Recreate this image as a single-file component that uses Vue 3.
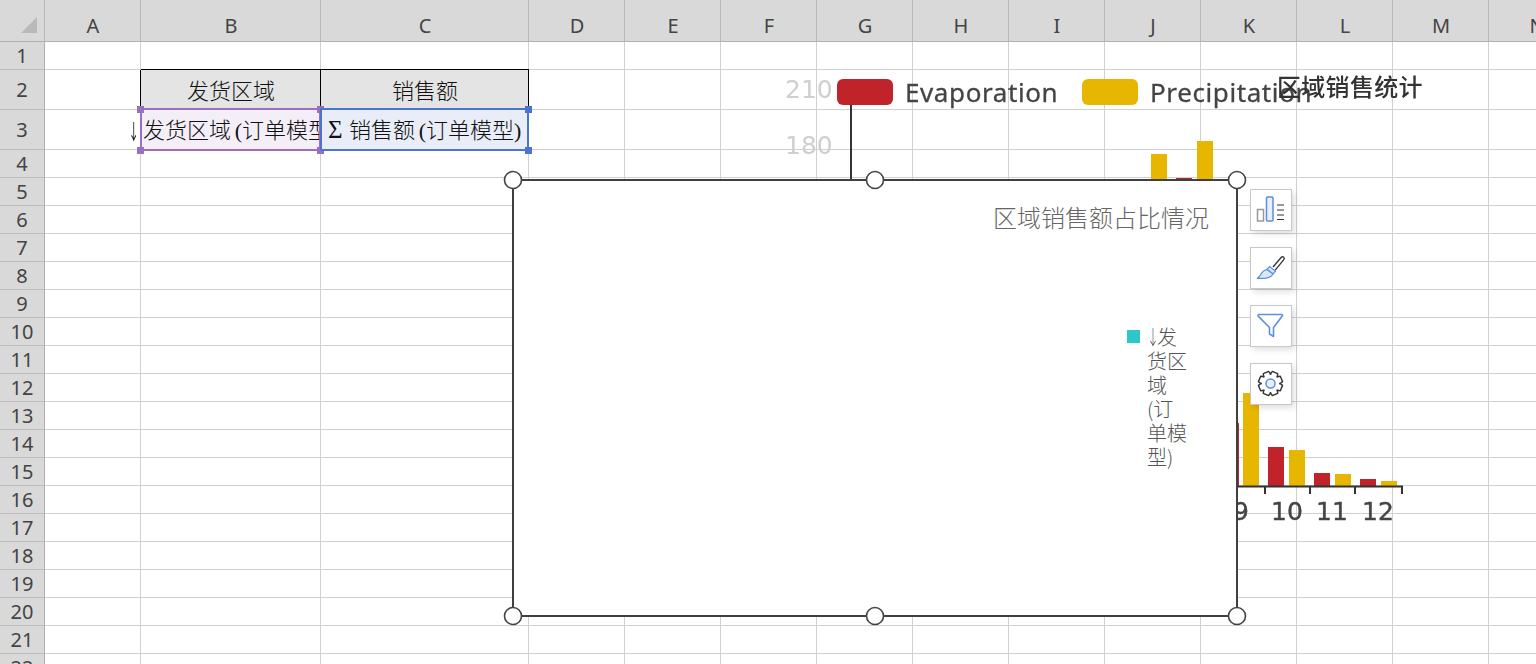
<script setup>
const letters = ['A','B','C','D','E','F','G','H','I','J','K','L','M','N']
const rows = Array.from({ length: 22 }, (_, i) => i + 1)
const legendLines = ['货区', '域', '(订', '单模', '型)']
const bars = [
  { x: 1151, y: 154, w: 16, h: 26, c: '#e6b600' },
  { x: 1176, y: 178, w: 16, h: 2, c: '#c1232b' },
  { x: 1197, y: 141, w: 16, h: 39, c: '#e6b600' },
  { x: 1236, y: 423, w: 3, h: 63, c: '#c1232b' },
  { x: 1243, y: 393, w: 16, h: 93, c: '#e6b600' },
  { x: 1268, y: 447, w: 16, h: 39, c: '#c1232b' },
  { x: 1289, y: 450, w: 16, h: 36, c: '#e6b600' },
  { x: 1314, y: 473, w: 16, h: 13, c: '#c1232b' },
  { x: 1335, y: 474, w: 16, h: 12, c: '#e6b600' },
  { x: 1360, y: 479, w: 16, h: 7, c: '#c1232b' },
  { x: 1381, y: 481, w: 16, h: 5, c: '#e6b600' }
]
const ticks = [1265, 1310, 1355, 1402]
const tickLabels = [[1241, '9'], [1287, '10'], [1332, '11'], [1378, '12']]
const handles = [[513,180],[875,180],[1237,180],[513,616],[875,616],[1237,616]]
const gear = (() => {
  const cx = 20.5, cy = 20.5, n = 8
  let d = ''
  for (let i = 0; i < n; i++) {
    const a = (i / n) * Math.PI * 2 + Math.PI / 8
    const pts = [[9.3, -0.42], [12.2, -0.24], [12.2, 0.24], [9.3, 0.42]]
    pts.forEach(([r, o], j) => {
      const x = (cx + r * Math.cos(a + o)).toFixed(2)
      const y = (cy + r * Math.sin(a + o)).toFixed(2)
      d += (i === 0 && j === 0 ? 'M' : 'L') + x + ' ' + y + ' '
    })
  }
  return d + 'Z'
})()
</script>

<template>
  <div class="page">
    <div class="sheet">
      <div class="corner"><i class="tri"></i></div>
      <div v-for="l in letters" :key="l" class="col-head">{{ l }}</div>
      <template v-for="r in rows" :key="r">
        <div class="row-head">{{ r }}</div>
        <div v-for="l in letters" :key="l" class="cell" :class="{
          'hd': r === 2 && (l === 'B' || l === 'C'),
          'hd-left': r === 2 && l === 'B',
          'a3': r === 3 && l === 'A',
          'sel-b': r === 3 && l === 'B',
          'sel-c': r === 3 && l === 'C'
        }">
          <template v-if="r === 2 && l === 'B'"><span class="hd-text">发货区域</span></template>
          <template v-else-if="r === 2 && l === 'C'"><span class="hd-text">销售额</span></template>
          <template v-else-if="r === 3 && l === 'A'"><span class="a3-arrow">↓</span></template>
          <template v-else-if="r === 3 && l === 'B'">
            <span class="clip">发货区域<b class="p open">(</b>订单模型<b class="p close">)</b></span>
            <i class="h tl"></i><i class="h tr"></i><i class="h bl"></i><i class="h br"></i>
          </template>
          <template v-else-if="r === 3 && l === 'C'">
            <span class="clip"><b class="sum">Σ</b>销售额<b class="p open">(</b>订单模型<b class="p close">)</b></span>
            <i class="h tr"></i><i class="h br"></i>
          </template>
        </div>
      </template>
    </div>

    <svg class="under" width="1536" height="664" viewBox="0 0 1536 664">
      <text x="785" y="98" class="axis-faint">210</text>
      <text x="785" y="154" class="axis-faint">180</text>
      <rect x="837" y="79" width="56" height="26" rx="6" fill="#c1232b" />
      <rect x="1082" y="79" width="56" height="26" rx="6" fill="#e6b600" />
      <text x="905" y="102" class="leg">Evaporation</text>
      <text x="1150" y="102" class="leg">Precipitation</text>
      <text x="1277" y="96" class="chart-title">区域销售统计</text>
      <line x1="851" y1="105" x2="851" y2="181" stroke="#333" stroke-width="2" />
      <rect v-for="(b, i) in bars" :key="i" :x="b.x" :y="b.y" :width="b.w" :height="b.h" :fill="b.c" />
      <line x1="1236" y1="486.5" x2="1403" y2="486.5" stroke="#333" stroke-width="2" />
      <line v-for="t in ticks" :key="t" :x1="t" y1="486" :x2="t" y2="494" stroke="#333" stroke-width="2" />
      <text v-for="t in tickLabels" :key="t[1]" :x="t[0]" y="520" text-anchor="middle" class="tick">{{ t[1] }}</text>
    </svg>

    <div class="frame">
      <div class="title">区域销售额占比情况</div>
      <div class="legend">
        <i class="swatch"></i>
        <div class="legend-text">
          <div><span class="arr">↓</span>发</div>
          <div v-for="t in legendLines" :key="t">{{ t }}</div>
        </div>
      </div>
    </div>

    <svg class="handles" width="1536" height="664" viewBox="0 0 1536 664">
      <circle v-for="(h, i) in handles" :key="i" :cx="h[0]" :cy="h[1]" r="8.5" fill="#fff" stroke="#444" stroke-width="1.6" />
    </svg>

    <div class="tools">
      <div class="tool">
        <svg width="41" height="41" viewBox="0 0 41 41" fill="none">
          <rect x="7.500" y="20.500" width="6" height="11.500" stroke="#999" stroke-width="1.500" />
          <rect x="16.500" y="8" width="6.500" height="24" rx="1" fill="#e8f0fc" stroke="#5b8fe0" stroke-width="1.500" />
          <path d="M27 16h7M27 21h7M27 26h7M27 30.500h7" stroke="#333" stroke-width="1.200" />
        </svg>
      </div>
      <div class="tool">
        <svg width="41" height="41" viewBox="0 0 41 41" fill="none">
          <path d="M23 20 31.300 10.300a1.700 1.700 0 0 1 2.500 2.300L25 23.300" fill="#fff" stroke="#333" stroke-width="1.300" />
          <path d="M19.500 19.500l6 4.500-2.500 3-6-4.500z" fill="#dbe7fa" stroke="#5b8fe0" stroke-width="1.200" />
          <path d="M17 22.500c-3.500.8-5 2.500-6.200 4.800-.7 1.500-2 3-3.500 4h7.500c3.500 0 6.500-1.700 8.200-4.300z" fill="#dbe7fa" stroke="#5b8fe0" stroke-width="1.200" stroke-linejoin="round" />
        </svg>
      </div>
      <div class="tool">
        <svg width="41" height="41" viewBox="0 0 41 41" fill="none">
          <path d="M9 9.500h22.500a1 1 0 0 1 .8 1.600L23.500 22.500v9l-4-2.500v-6.500L8.200 11.100a1 1 0 0 1 .8-1.600z" stroke="#5b8fe0" stroke-width="1.600" stroke-linejoin="round" />
        </svg>
      </div>
      <div class="tool">
        <svg width="41" height="41" viewBox="0 0 41 41" fill="none">
          <path :d="gear" stroke="#333" stroke-width="1.400" stroke-linejoin="round" />
          <circle cx="20.500" cy="20.500" r="4.500" fill="#e8f0fc" stroke="#5b8fe0" stroke-width="1.500" />
        </svg>
      </div>
    </div>
  </div>
</template>

<style>
html, body { margin: 0; background: #fff; overflow: hidden; }
</style>

<style scoped>
.page {
  position: relative;
  width: 1536px;
  height: 664px;
  overflow: hidden;
  background: #fff;
}
.sheet {
  display: grid;
  grid-template-columns: 45px 96px 180px 208px repeat(11, 96px);
  grid-template-rows: 42px 28px 40px 40px repeat(19, 28px);
  width: 1585px;
  font-family: "Noto Sans", "Liberation Sans", sans-serif;
}
.corner, .col-head, .row-head {
  background: #d9d9d9;
  color: #444;
  font-size: 20px;
  display: flex;
  align-items: center;
  justify-content: center;
  box-sizing: border-box;
}
.corner {
  position: relative;
  border-right: 1px solid #b8b8b8;
  border-bottom: 1px solid #b0b0b0;
}
.tri {
  position: absolute;
  left: 21px;
  top: 17px;
  width: 0;
  height: 0;
  border-left: 16px solid transparent;
  border-bottom: 16px solid #b9b9b9;
}
.col-head {
  border-bottom: 1px solid #b0b0b0;
  border-right: 1px solid #b8b8b8;
  padding: 10px 0 0 1px;
}
.row-head {
  border-bottom: 1px solid #bcbcbc;
  border-right: 1px solid #b0b0b0;
}
.cell {
  position: relative;
  box-sizing: border-box;
  min-width: 0;
  border-right: 1px solid #d0d0d0;
  border-bottom: 1px solid #d0d0d0;
  font-family: "Noto Sans CJK SC", sans-serif;
  font-weight: 300;
  font-size: 22px;
  color: #111;
  display: flex;
  align-items: center;
}
.hd {
  background: #e4e4e4;
  justify-content: center;
  border-right-color: #000;
  box-shadow: 0 -1px 0 #000;
}
.hd-left { box-shadow: 0 -1px 0 #000, -1px 0 0 #000; }
.hd-text { margin-top: -2px; padding-left: 1px; }
.a3 {
  justify-content: flex-end;
  padding-right: 4px;
  overflow: hidden;
}
.a3-arrow {
  display: inline-block;
  width: 10px;
  font-size: 21px;
  font-weight: 400;
  color: #000;
  transform: scaleX(0.5);
  text-align: center;
}
.clip {
  display: block;
  overflow: hidden;
  white-space: nowrap;
  width: 100%;
  line-height: 36px;
}
.p {
  display: inline-block;
  width: 11px;
  font-family: "Liberation Serif", serif;
  font-weight: 400;
}
.open { text-align: right; }
.close { text-align: left; }
.sum {
  display: inline-block;
  width: 21px;
  font-family: "Liberation Serif", serif;
  font-weight: 400;
  font-size: 25px;
}
.sel-b, .sel-c {
  z-index: 1;
  margin: -2px -1px 0 -1px;
  height: 43px;
  width: calc(100% + 1px);
}
.sel-b {
  background: #f3eef8;
  border: 2px solid #9a6fc0;
  padding-left: 1px;
}
.sel-c {
  background: #e8edf8;
  border: 2px solid #4a74cf;
  padding-left: 6px;
}
.h {
  position: absolute;
  width: 7px;
  height: 7px;
  background: #9a6fc0;
  z-index: 2;
}
.sel-c .h { background: #4a74cf; }
.tl { left: -5px; top: -4px; }
.tr { right: -5px; top: -4px; }
.bl { left: -5px; bottom: -5px; }
.br { right: -5px; bottom: -5px; }

.under, .handles {
  position: absolute;
  left: 0;
  top: 0;
  pointer-events: none;
}
.under { filter: blur(0.7px); }
.axis-faint {
  font: 25px "DejaVu Sans", sans-serif;
  fill: #cfcfcf;
}
.leg {
  font: 26px "Noto Sans", sans-serif;
  letter-spacing: 0.6px;
  fill: #444;
  stroke: #444;
  stroke-width: 0.3px;
}
.chart-title {
  font: 500 24px "Noto Sans CJK SC", sans-serif;
  letter-spacing: 0.3px;
  fill: #333;
}
.tick {
  font: 25px "DejaVu Sans", sans-serif;
  fill: #444;
  stroke: #444;
  stroke-width: 0.4px;
}
.frame {
  position: absolute;
  left: 512px;
  top: 179px;
  width: 726px;
  height: 438px;
  box-sizing: border-box;
  border: 2px solid #404040;
  background: #fff;
  display: flex;
  flex-direction: column;
  align-items: flex-end;
  font-family: "Noto Sans CJK SC", sans-serif;
  font-weight: 300;
}
.title {
  font-size: 24px;
  line-height: 32px;
  color: #666;
  margin: 20px 27px 0 0;
  white-space: nowrap;
}
.legend {
  display: flex;
  gap: 7px;
  width: 109px;
  margin: 93px 0 0 0;
}
.swatch {
  width: 13px;
  height: 13px;
  margin-top: 4px;
  background: #2ec7c9;
  flex: none;
}
.legend-text {
  font-size: 20px;
  line-height: 24px;
  color: #555;
  margin-top: -1px;
}
.arr {
  display: inline-block;
  width: 10px;
  transform: scaleX(0.6);
  transform-origin: 0 50%;
}
.tools {
  position: absolute;
  left: 1250px;
  top: 189px;
  display: flex;
  flex-direction: column;
  gap: 16px;
}
.tool {
  width: 42px;
  height: 42px;
  box-sizing: border-box;
  background: #fff;
  border: 1px solid #c8c8c8;
  box-shadow: 3px 3px 6px rgba(0, 0, 0, 0.12);
  display: flex;
}
.tool svg { display: block; margin: -1px; flex: none; }
</style>
